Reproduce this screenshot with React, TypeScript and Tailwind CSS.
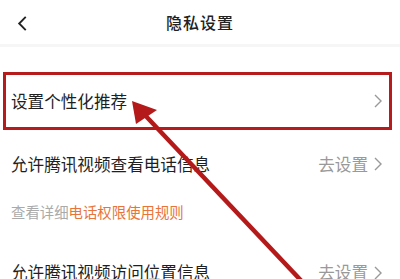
import React from "react";

function Chevron({ className }: { className?: string }) {
  return (
    <svg viewBox="0 0 8 14" className={className} fill="none" stroke="currentColor" strokeWidth="1.4">
      <polyline points="1,1 7,7 1,13" />
    </svg>
  );
}

function SettingRow({ label, action, inset }: { label: string; action?: string; inset?: boolean }) {
  return (
    <div className={inset ? "flex h-[52px] items-center justify-between pl-[5px] pr-[7px]" : "flex h-[52px] items-center justify-between pl-[11px] pr-[18px]"}>
      <span className="text-[16.6px] text-[#1f1f1f]">{label}</span>
      <span className="flex items-center gap-[6px] text-[16.6px] text-[#999]">
        {action}
        <Chevron className="h-[14px] w-[8px] text-[#999]" />
      </span>
    </div>
  );
}

export default function App() {
  return (
    <div
      className="relative h-[279px] w-[400px] overflow-hidden bg-white"
      style={{ fontFamily: '"Noto Sans CJK SC", "Noto Sans", sans-serif' }}
    >
      <header className="relative flex h-[47px] items-center justify-center border-b-[3px] border-[#f6f6f6]">
        <svg viewBox="0 0 12 16" className="absolute left-[16px] top-[16px] h-[15px] w-[12px]" fill="none" stroke="#222" strokeWidth="2">
          <polyline points="10,1 3,8 10,15" />
        </svg>
        <h1 className="text-[16px] font-medium tracking-[1px] text-[#222]">隐私设置</h1>
      </header>

      <div className="ml-[3px] mr-[8px] mt-[25px] border-[3px] border-[#b71c1c]">
        <SettingRow label="设置个性化推荐" inset />
      </div>

      <div className="mt-[8px]">
        <SettingRow label="允许腾讯视频查看电话信息" action="去设置" />
      </div>
      <div className="mt-[11px] pl-[11px] text-[14.4px] text-[#aaa]">
        查看详细<span className="text-[#e8743a]">电话权限使用规则</span>
      </div>
      <div className="mt-[24px]">
        <SettingRow label="允许腾讯视频访问位置信息" action="去设置" />
      </div>

      <svg className="pointer-events-none absolute left-0 top-0" width="400" height="279" viewBox="0 0 400 279">
        <line x1="142" y1="112" x2="310" y2="290" stroke="#b51a1a" strokeWidth="4.5" />
        <polygon points="132,101 157,110 136,124" fill="#b51a1a" />
      </svg>
    </div>
  );
}
